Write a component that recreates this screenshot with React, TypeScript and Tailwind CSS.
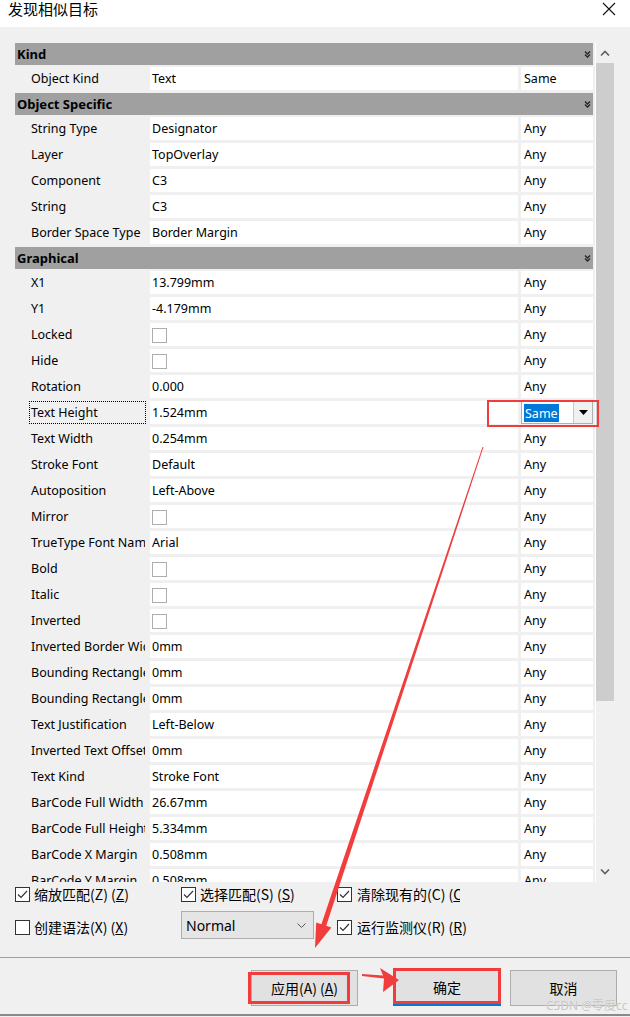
import React from 'react';

type Item =
  | { head: string }
  | { label: string; value?: string; check?: boolean; right?: string; focus?: boolean; same?: boolean };

const ITEMS: Item[] = [
  { head: 'Kind' },
  { label: 'Object Kind', value: 'Text', right: 'Same' },
  { head: 'Object Specific' },
  { label: 'String Type', value: 'Designator' },
  { label: 'Layer', value: 'TopOverlay' },
  { label: 'Component', value: 'C3' },
  { label: 'String', value: 'C3' },
  { label: 'Border Space Type', value: 'Border Margin' },
  { head: 'Graphical' },
  { label: 'X1', value: '13.799mm' },
  { label: 'Y1', value: '-4.179mm' },
  { label: 'Locked', check: true },
  { label: 'Hide', check: true },
  { label: 'Rotation', value: '0.000' },
  { label: 'Text Height', value: '1.524mm', focus: true, same: true },
  { label: 'Text Width', value: '0.254mm' },
  { label: 'Stroke Font', value: 'Default' },
  { label: 'Autoposition', value: 'Left-Above' },
  { label: 'Mirror', check: true },
  { label: 'TrueType Font Name', value: 'Arial' },
  { label: 'Bold', check: true },
  { label: 'Italic', check: true },
  { label: 'Inverted', check: true },
  { label: 'Inverted Border Width', value: '0mm' },
  { label: 'Bounding Rectangle Width', value: '0mm' },
  { label: 'Bounding Rectangle Height', value: '0mm' },
  { label: 'Text Justification', value: 'Left-Below' },
  { label: 'Inverted Text Offset', value: '0mm' },
  { label: 'Text Kind', value: 'Stroke Font' },
  { label: 'BarCode Full Width', value: '26.67mm' },
  { label: 'BarCode Full Height', value: '5.334mm' },
  { label: 'BarCode X Margin', value: '0.508mm' },
  { label: 'BarCode Y Margin', value: '0.508mm' },
];

function Collapse() {
  return (
    <svg width="7" height="7" viewBox="0 0 7 7" className="shrink-0">
      <path d="M1 0.5 L3.5 3 L6 0.5 M1 3.5 L3.5 6 L6 3.5" fill="none" stroke="#222" strokeWidth="1.3" />
    </svg>
  );
}

function Check({ on, light }: { on?: boolean; light?: boolean }) {
  return (
    <div
      className={`w-[15px] h-[15px] bg-white border shrink-0 flex items-center justify-center ${light ? 'border-[#adadad]' : 'border-[#333333]'}`}
    >
      {on && (
        <svg width="13" height="13" viewBox="0 0 13 13">
          <path d="M2 6.5 L5 9.5 L11 3" fill="none" stroke="#333" strokeWidth="1.2" />
        </svg>
      )}
    </div>
  );
}

export default function App() {
  return (
    <div className="relative w-[630px] h-[1017px] overflow-hidden bg-[#f0f0f0] text-black font-['Noto_Sans','Noto_Sans_CJK_SC',sans-serif]">
      {/* title bar */}
      <div className="h-[27px] bg-white flex items-start justify-between">
        <span className="ml-[8px] text-[15px] leading-[17px] font-['Noto_Sans_CJK_SC',sans-serif]">发现相似目标</span>
        <svg width="14" height="14" viewBox="0 0 14 14" className="mr-[14px] mt-[2px]">
          <path d="M1 1 L13 13 M13 1 L1 13" stroke="#111" strokeWidth="1.1" />
        </svg>
      </div>

      {/* property grid */}
      <div className="flex pt-[16px] pl-[15px]">
        <div className="w-[578px] h-[839px] overflow-hidden text-[12.5px]">
          {ITEMS.map((it, i) =>
            'head' in it ? (
              <div key={i} className="h-[22px] mb-[2px] bg-[#a0a0a0] flex items-center justify-between pl-[2px] pr-[2px] font-bold text-[13px]">
                <span className="pt-[2px]">{it.head}</span>
                <Collapse />
              </div>
            ) : (
              <div key={i} className="flex h-[23px] mb-[3px]">
                <div className="w-[135px] pl-[14px] flex items-center">
                  <span
                    className={`h-[23px] w-[117px] pl-[1px] pt-[2px] flex items-center overflow-hidden whitespace-nowrap border ${it.focus ? 'border-dotted border-black' : 'border-transparent'}`}
                  >
                    {it.label}
                  </span>
                </div>
                <div className="w-[368px] bg-white flex items-center pl-[2px] pt-[2px] whitespace-nowrap">
                  {it.check ? <Check light /> : it.value}
                </div>
                {it.same ? (
                  <div className="w-[72px] ml-[3px] bg-white border border-[#b0b0b0] flex items-center justify-between pl-[2px]">
                    <span className="bg-[#0078d7] text-white px-[1px] leading-[17px] pt-[1px]">Same</span>
                    <div className="w-[19px] h-full bg-[#f0f0f0] border-l border-[#c8c8c8] flex items-center justify-center">
                      <svg width="9" height="5" viewBox="0 0 9 5">
                        <path d="M0 0 L9 0 L4.5 5 Z" fill="#000" />
                      </svg>
                    </div>
                  </div>
                ) : (
                  <div className="w-[72px] ml-[3px] bg-white flex items-center pl-[3px] pt-[2px]">{it.right ?? 'Any'}</div>
                )}
              </div>
            )
          )}
        </div>
        {/* scrollbar */}
        <div className="ml-[2px] w-[19px] h-[839px] border-l border-white flex flex-col">
          <div className="h-[20px] flex items-center justify-center">
            <svg width="10" height="6" viewBox="0 0 10 6">
              <path d="M1 5.5 L5 1.5 L9 5.5" fill="none" stroke="#606060" strokeWidth="1.6" />
            </svg>
          </div>
          <div className="h-[638px] bg-[#cdcdcd]" />
          <div className="flex-1" />
          <div className="h-[20px] flex items-center justify-center">
            <svg width="10" height="6" viewBox="0 0 10 6">
              <path d="M1 0.5 L5 4.5 L9 0.5" fill="none" stroke="#606060" strokeWidth="1.6" />
            </svg>
          </div>
        </div>
      </div>

      {/* options */}
      <div className="pl-[15px] text-[14px] font-['Noto_Sans_CJK_SC',sans-serif]">
        <div className="flex items-center h-[15px] mt-[5px]">
          <div className="w-[166px] flex items-center gap-[4px]">
            <Check on />
            <span className="whitespace-nowrap">
              缩放匹配(Z) (<span className="underline">Z</span>)
            </span>
          </div>
          <div className="w-[156px] flex items-center gap-[4px]">
            <Check on />
            <span className="whitespace-nowrap">
              选择匹配(S) (<span className="underline">S</span>)
            </span>
          </div>
          <div className="flex items-center gap-[5px]">
            <Check on />
            <span className="w-[103px] overflow-hidden whitespace-nowrap">
              清除现有的(C) (<span className="underline">C</span>)
            </span>
          </div>
        </div>
        <div className="flex items-center h-[28px] mt-[9px]">
          <div className="w-[166px] flex items-center gap-[4px] mt-[4px]">
            <Check />
            <span className="whitespace-nowrap">
              创建语法(X) (<span className="underline">X</span>)
            </span>
          </div>
          <div className="w-[133px] h-[28px] bg-[#e5e5e5] border border-[#adadad] flex items-center justify-between pl-[4px] pr-[7px] font-['Noto_Sans',sans-serif]">
            <span>Normal</span>
            <svg width="9" height="5" viewBox="0 0 9 5">
              <path d="M0.5 0.5 L4.5 4.5 L8.5 0.5" fill="none" stroke="#555" strokeWidth="1" />
            </svg>
          </div>
          <div className="ml-[23px] flex items-center gap-[5px] mt-[4px]">
            <Check on />
            <span className="whitespace-nowrap">
              运行监测仪(R) (<span className="underline">R</span>)
            </span>
          </div>
        </div>

        <div className="-ml-[15px] mt-[18px] border-t border-[#a0a0a0]" />

        {/* buttons */}
        <div className="flex mt-[12px] ml-[236px]">
          <div className="w-[107px] h-[36px] bg-[#e1e1e1] border border-[#adadad] flex items-center justify-center">
            应用(A) (<span className="underline">A</span>)
          </div>
          <div className="ml-[35px] -mt-[2px] w-[108px] h-[38px] bg-[#e1e1e1] border-2 border-[#0078d7] flex items-center justify-center">
            确定
          </div>
          <div className="ml-[9px] w-[107px] h-[36px] bg-[#e1e1e1] border border-[#adadad] flex items-center justify-center">
            取消
          </div>
        </div>
      </div>

      <div className="absolute left-0 right-0 top-[1014px] border-t-2 border-[#8a8a8a]" />
      <div className="absolute left-[546px] top-[997px] text-[12px] text-[#c4c4c4] [text-shadow:0_0_1px_white] whitespace-nowrap">
        CSDN @零度cc
      </div>

      {/* annotations */}
      <div className="absolute left-[487px] top-[400px] w-[112px] h-[27px] border-2 border-[#f03c3c]" />
      <div className="absolute left-[248px] top-[972px] w-[102px] h-[32px] border-[3px] border-[#f03c3c]" />
      <div className="absolute left-[393px] top-[968px] w-[108px] h-[36px] border-[3px] border-[#f03c3c]" />
      <svg className="absolute left-0 top-0 pointer-events-none" width="630" height="1017" viewBox="0 0 630 1017">
        <polygon points="483.5,447 482.5,447 321.4,924.2 316.2,922.5 315,948 331.4,927.5 326.2,925.8" fill="#f23d3d" />
        <polygon points="362,974 362,976 384,978.5 383,992 399,980 380,968 383,975.5" fill="#f23d3d" />
      </svg>
    </div>
  );
}
